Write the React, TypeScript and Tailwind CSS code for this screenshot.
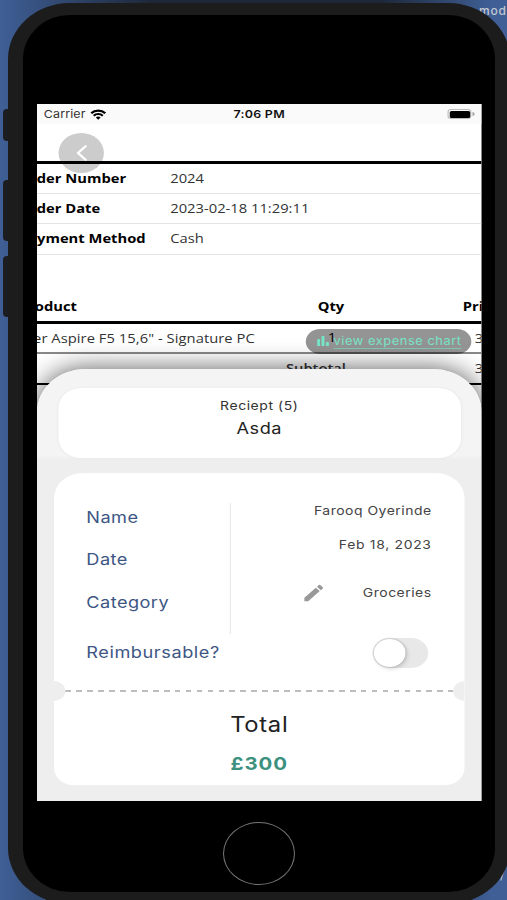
import { MdEdit } from "react-icons/md";
import { ChevronLeft } from "lucide-react";

type OrderRow = {
  label: string;
  value: string;
};

const ORDER_ROWS: OrderRow[] = [
  { label: "Order Number", value: "2024" },
  { label: "Order Date", value: "2023-02-18 11:29:11" },
  { label: "Payment Method", value: "Cash" },
];

function StatusBar() {
  return (
    <div className="grid h-5 grid-cols-3 items-center bg-[#fafafa] px-1.5 text-[11px] tracking-[0.1px] text-[#333]">
      <div className="flex items-center gap-[4px] pt-px">
        <span>Carrier</span>
        <svg width="14" height="11" viewBox="0 0 14 11" fill="none">
          <path d="M0.8 4.2a8.8 8.8 0 0 1 12.4 0" stroke="#000" strokeWidth="2.2" />
          <path d="M3 6.7a5.7 5.7 0 0 1 8 0" stroke="#000" strokeWidth="2" />
          <path d="M7 10.8 4.9 8.6a3 3 0 0 1 4.2 0z" fill="#000" />
        </svg>
      </div>
      <span className="pt-px text-center font-semibold tracking-[0.2px] text-[#111]">
        7:06 PM
      </span>
      <div className="flex items-center justify-end gap-px">
        <div className="h-[10px] w-[21px] rounded-[3px] border border-[#bbb] p-[0.5px]">
          <div className="h-full rounded-[1.5px] bg-black" />
        </div>
        <div className="h-[4px] w-[1.5px] rounded-r bg-[#aaa]" />
      </div>
    </div>
  );
}

function OrderDocument() {
  return (
    <div className="h-[280px] font-['Open_Sans','Noto_Sans',sans-serif] text-[13px] text-[#333]">
      <div className="h-[37px]" />
      <div className="border-t-[3px] border-black">
        {ORDER_ROWS.map((row) => (
          <div
            key={row.label}
            className="flex h-[30.2px] items-center border-b border-[#e4e4e4]"
          >
            <div className="flex w-[117.5px] shrink-0">
              <span
                className={
                  row.label === "Payment Method"
                    ? "-ml-[16px] whitespace-nowrap font-bold text-black"
                    : "-ml-[16.5px] whitespace-nowrap font-bold text-black"
                }
              >
                {row.label}
              </span>
            </div>
            <span>{row.value}</span>
          </div>
        ))}
      </div>

      <div className="mt-[37px] flex h-[29px] items-center pt-[2px] font-bold text-black">
        <span className="-ml-[16px] w-[263.5px] shrink-0">Product</span>
        <span className="w-[128px] shrink-0">Qty</span>
        <span>Price</span>
      </div>
      <div className="flex h-[33px] items-center whitespace-nowrap border-b-2 border-t-[3px] border-b-[#888] border-t-black pt-[2px]">
        <span className="-ml-[18px] w-[274.5px] shrink-0 tracking-[0.04px]">
          Acer Aspire F5 15,6" - Signature PC
        </span>
        <span className="w-[129.5px] shrink-0 pb-0.5 text-black">1</span>
        <span>300</span>
      </div>
      <div className="flex h-[31px] items-center border-b-2 border-black pt-[2px]">
        <span className="ml-[219.5px] w-[166.5px] shrink-0 font-semibold">
          Subtotal
        </span>
        <span>300</span>
      </div>
    </div>
  );
}

function Toggle() {
  return (
    <div className="h-[30px] w-[48.5px] rounded-full bg-[#e8e8e8] p-px">
      <div className="h-[28px] w-[28px] rounded-full bg-white shadow-[0_0_2px_rgba(0,0,0,0.3),2px_2px_4px_rgba(0,0,0,0.12)]" />
    </div>
  );
}

function ReceiptSheet() {
  return (
    <div className="absolute inset-x-0 bottom-0 flex h-[432px] flex-col items-center rounded-t-[43px] bg-gradient-to-b from-[#f4f4f4] from-20% to-[#eeeeee] to-21% shadow-[0_0_24px_rgba(0,0,0,0.65)]">
      <div className="mt-[19px] flex h-[70px] w-[355px] flex-col items-center rounded-[20px] bg-white pt-[10px] shadow-[0_0_3px_rgba(0,0,0,0.05)]">
        <p className="text-[12.3px] leading-4 tracking-[0.5px] text-[#333]">
          Reciept (5)
        </p>
        <p className="mt-[3px] text-[16px] leading-[22px] tracking-[0.5px] text-[#222]">
          Asda
        </p>
      </div>

      <div className="mt-[15px] flex h-[312px] w-[362px] flex-col overflow-hidden rounded-b-[17px] rounded-t-[25px] bg-white">
        <div className="flex h-[161px] px-[29px] pt-[30px]">
          <div className="flex w-[125.5px] flex-col gap-[18.4px] pt-[2px] text-[16px] leading-6 tracking-[0.4px] text-[#3d5684]">
            <span className="-ml-[0.5px]">Name</span>
            <span className="-ml-[0.5px]">Date</span>
            <span className="-ml-[0.5px]">Category</span>
          </div>
          <div className="h-[131px] w-px bg-[#e8e8e8]" />
          <div className="flex flex-1 flex-col text-right text-[12.3px] tracking-[0.45px] text-[#444]">
            <span className="h-[34px] leading-[15px]">Farooq Oyerinde</span>
            <span className="h-[44px] leading-[15px] tracking-[0.6px]">
              Feb 18, 2023
            </span>
            <div className="flex items-center justify-between pl-[62.5px]">
              <MdEdit className="h-[24px] w-[22px] text-[#999]" />
              <span>Groceries</span>
            </div>
          </div>
        </div>
        <div className="flex h-[47px] items-start justify-between pl-[28.5px] pr-[32.5px]">
          <span className="pt-[6px] text-[16px] leading-6 tracking-[0.5px] text-[#3d5684]">
            Reimbursable?
          </span>
          <div className="pt-[4px]">
            <Toggle />
          </div>
        </div>

        <div className="flex h-5 items-center justify-between">
          <div className="h-5 w-2.5 rounded-r-full bg-[#eeeeee]" />
          <div className="h-[1.5px] flex-1 bg-[repeating-linear-gradient(90deg,#bdbdbd_0_5px,transparent_5px_9.65px)]" />
          <div className="h-5 w-2.5 rounded-l-full bg-[#eeeeee]" />
        </div>

        <div className="flex flex-col items-center pt-[10px]">
          <span className="text-[21px] leading-7 tracking-[0.6px] text-[#222]">
            Total
          </span>
          <span className="mt-[13px] text-[18px] font-bold leading-6 tracking-[0.8px] text-[#3c917f]">
            £300
          </span>
        </div>
      </div>
    </div>
  );
}

function PhoneScreen() {
  return (
    <div className="relative h-[697px] w-[392px] shrink-0 origin-left scale-x-[1.134] overflow-hidden bg-white">
      <StatusBar />
      <OrderDocument />

      <button
        type="button"
        aria-label="Back"
        className="absolute left-[19px] top-[29px] flex h-[39.5px] w-10 items-center justify-center rounded-full bg-black/20"
      >
        <ChevronLeft className="h-[30px] w-[27px] text-white" strokeWidth={1.9} />
      </button>

      <ReceiptSheet />

      <div className="absolute left-[237px] top-[224.5px] flex h-[25px] w-[145.5px] items-center rounded-full bg-black/42 pl-[9.5px]">
        <svg width="11" height="12" viewBox="0 0 11 12" fill="#76e4c6">
          <rect x="0" y="4" width="2.6" height="7" rx="0.6" />
          <rect x="3.9" y="1" width="2.6" height="10" rx="0.6" />
          <rect x="7.8" y="7" width="2.6" height="4" rx="0.6" />
        </svg>
        <span className="ml-[4px] whitespace-nowrap text-[11.3px] tracking-[0.5px] text-[#76e4c6] underline decoration-[#76e4c6]/60 underline-offset-[3px]">
          view expense chart
        </span>
      </div>
    </div>
  );
}

export default function App() {
  return (
    <div className="relative h-[900px] w-[507px] overflow-hidden bg-[linear-gradient(90deg,#3f5f96,#1d2738_30%,#1d2738_75%,#3f5f96_97%)] font-['Inter','Liberation_Sans',sans-serif]">
      <span className="absolute left-[479px] top-[2px] text-[12px] font-medium tracking-[0.8px] text-[#c3c8d2]">
        mod
      </span>
      <span className="absolute left-[500px] top-[866px] text-[12px] text-[#c3c8d2]">
        /
      </span>
      <div className="absolute left-[3px] top-[109px] h-[32px] w-[6px] rounded-l bg-[#1b1d20]" />
      <div className="absolute left-[3px] top-[180px] h-[61px] w-[6px] rounded-l bg-[#1b1d20]" />
      <div className="absolute left-[3px] top-[256px] h-[61px] w-[6px] rounded-l bg-[#1b1d20]" />

      <div className="relative ml-2 mt-[3px] flex h-[901px] w-[502px] flex-col rounded-[62px/56px] border-x-[15px] border-y-[12px] border-[#1c1c1c] bg-black pl-[14px] pt-[89px]">
        <PhoneScreen />
        <div className="ml-[186px] mt-[21px] h-[63px] w-[72px] shrink-0 rounded-[50%] border-[1.5px] border-[#777]" />
      </div>
    </div>
  );
}
